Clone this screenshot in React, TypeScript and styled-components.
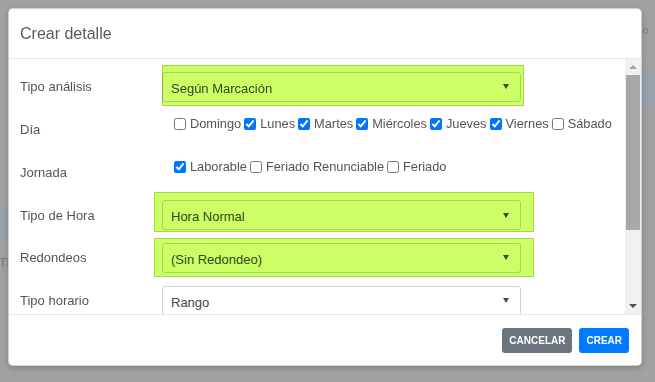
import React from 'react'
import styled, { createGlobalStyle } from 'styled-components'

const GlobalStyle = createGlobalStyle`
  html, body {
    margin: 0;
    padding: 0;
  }
  body {
    font-family: 'Liberation Sans', Arial, sans-serif;
    background: #a1a1a1;
  }
`

const Screen = styled.div`
  position: relative;
  width: 655px;
  height: 382px;
  overflow: hidden;
  background: #a1a1a1;
`

// page behind the backdrop, only its edges peek out
const Underlay = styled.div`
  display: flex;
  justify-content: space-between;
  height: 100%;
`

const Edge = styled.div<{ $width: number; $top: number; $end?: boolean }>`
  width: ${(p) => p.$width}px;
  padding-top: ${(p) => p.$top}px;
  overflow: hidden;
  display: flex;
  flex-direction: column;
  align-items: ${(p) => (p.$end ? 'flex-end' : 'flex-start')};
`

const FaintText = styled.span<{ $shift: number; $size: number; $gap?: number }>`
  font-size: ${(p) => p.$size}px;
  color: #7c7c7c;
  white-space: nowrap;
  margin-top: ${(p) => p.$gap || 0}px;
  margin-left: ${(p) => p.$shift}px;
  margin-right: ${(p) => -p.$shift}px;
  line-height: 16px;
`

const Band = styled.div<{ $height: number; $gap: number }>`
  width: 100%;
  height: ${(p) => p.$height}px;
  margin-top: ${(p) => p.$gap}px;
  background: #99a1ab;
  flex-shrink: 0;
`

const Modal = styled.div`
  position: absolute;
  top: 8px;
  left: 8px;
  width: 634px;
  height: 358px;
  box-sizing: border-box;
  background: #fff;
  border: 1px solid rgba(0, 0, 0, 0.18);
  border-radius: 5px;
  box-shadow: 0 2px 6px rgba(0, 0, 0, 0.2);
  display: flex;
  flex-direction: column;
  overflow: hidden;
`

const Header = styled.div`
  height: 49px;
  flex-shrink: 0;
  display: flex;
  align-items: center;
  padding-left: 11px;
  border-bottom: 1px solid #e6e9ec;
`

const Title = styled.h5`
  margin: 0;
  font-size: 16px;
  font-weight: 400;
  color: #5a5a5a;
`

const Body = styled.div`
  flex: 1;
  display: flex;
  min-height: 0;
`

const Content = styled.div`
  flex: 1;
  overflow: hidden;
  padding: 6px 0 0 11px;
`

const Row = styled.div<{ $height: number }>`
  display: grid;
  grid-template-columns: 142px 1fr;
  height: ${(p) => p.$height}px;
  align-items: center;
`

const Label = styled.label`
  font-size: 13px;
  color: #555;
  line-height: 1;
`

const SelectWrap = styled.div`
  position: relative;
  width: 359px;
  height: 30px;
`

const Select = styled.div`
  box-sizing: border-box;
  width: 100%;
  height: 100%;
  border: 1px solid #ced4da;
  border-radius: 3px;
  background: #fff;
  display: flex;
  align-items: center;
  justify-content: space-between;
  padding: 3px 11px 0 8px;
  font-size: 13px;
  color: #40464c;
`

const Caret = styled.span`
  width: 0;
  height: 0;
  margin-top: -3px;
  border-left: 3.5px solid transparent;
  border-right: 3.5px solid transparent;
  border-top: 5px solid #4a4a4a;
`

const Highlight = styled.div<{ $t: number; $l: number; $r: number; $b: number }>`
  position: absolute;
  top: ${(p) => p.$t}px;
  left: ${(p) => p.$l}px;
  right: ${(p) => p.$r}px;
  bottom: ${(p) => p.$b}px;
  background: #ccff66;
  border: 1px solid #a6d842;
  mix-blend-mode: multiply;
  pointer-events: none;
`

const Checks = styled.div`
  align-self: start;
  padding-top: 6px;
  margin-left: 9px;
  display: flex;
  flex-wrap: wrap;
  font-size: 12.8px;
  line-height: 20px;
  color: #555;
`

const Check = styled.label`
  display: inline-flex;
  align-items: center;
  white-space: nowrap;

  input {
    width: 12px;
    height: 12px;
    margin: 0 4px 0 3px;
  }
`

const Scrollbar = styled.div`
  width: 16px;
  flex-shrink: 0;
  background: #f1f1f1;
  display: flex;
  flex-direction: column;
`

const ArrowBox = styled.div`
  height: 16px;
  display: flex;
  align-items: center;
  justify-content: center;
  flex-shrink: 0;
`

const Arrow = styled.span<{ $up?: boolean }>`
  width: 0;
  height: 0;
  border-left: 4px solid transparent;
  border-right: 4px solid transparent;
  ${(p) =>
    p.$up
      ? 'border-bottom: 4px solid #a3a3a3;'
      : 'border-top: 4px solid #505050;'}
`

const Thumb = styled.div`
  height: 155px;
  margin: 0 1px;
  background: #a8a8a8;
`

const Track = styled.div`
  flex: 1;
`

const Footer = styled.div`
  height: 50px;
  flex-shrink: 0;
  border-top: 1px solid #e6e9ec;
  display: flex;
  justify-content: flex-end;
  align-items: center;
  gap: 7px;
  padding-right: 12px;
`

const Button = styled.button<{ $variant: 'secondary' | 'primary' }>`
  height: 25px;
  padding: 0 7px;
  border: none;
  border-radius: 3px;
  font-family: 'Liberation Sans', Arial, sans-serif;
  font-size: 10px;
  font-weight: 700;
  color: #fff;
  background: ${(p) => (p.$variant === 'primary' ? '#007bff' : '#6c757d')};
`

const dias = [
  { name: 'Domingo', checked: false },
  { name: 'Lunes', checked: true },
  { name: 'Martes', checked: true },
  { name: 'Miércoles', checked: true },
  { name: 'Jueves', checked: true },
  { name: 'Viernes', checked: true },
  { name: 'Sábado', checked: false },
]

const jornadas = [
  { name: 'Laborable', checked: true },
  { name: 'Feriado Renunciable', checked: false },
  { name: 'Feriado', checked: false },
]

type Mark = { t: number; l: number; r: number; b: number }

const SelectField: React.FC<{ value: string; mark?: Mark }> = ({ value, mark }) => (
  <SelectWrap>
    <Select>
      <span>{value}</span>
      <Caret />
    </Select>
    {mark && <Highlight $t={mark.t} $l={mark.l} $r={mark.r} $b={mark.b} />}
  </SelectWrap>
)

const CheckGroup: React.FC<{ items: { name: string; checked: boolean }[] }> = ({ items }) => (
  <Checks>
    {items.map((item) => (
      <Check key={item.name}>
        <input type="checkbox" defaultChecked={item.checked} />
        {item.name}
      </Check>
    ))}
  </Checks>
)

export default function App() {
  return (
    <Screen>
      <GlobalStyle />
      <Underlay>
        <Edge $width={8} $top={212}>
          <Band $height={31} $gap={0} />
          <FaintText $shift={-1} $size={13} $gap={12}>
            Ti
          </FaintText>
        </Edge>
        <Edge $width={13} $top={22} $end>
          <FaintText $shift={-6} $size={11}>
            Horario
          </FaintText>
          <Band $height={33} $gap={37} />
        </Edge>
      </Underlay>

      <Modal>
        <Header>
          <Title>Crear detalle</Title>
        </Header>
        <Body>
          <Content>
            <Row $height={43}>
              <Label>Tipo análisis</Label>
              <SelectField value="Según Marcación" mark={{ t: -7, l: 0, r: -3, b: -4 }} />
            </Row>
            <Row $height={43}>
              <Label>Día</Label>
              <CheckGroup items={dias} />
            </Row>
            <Row $height={43}>
              <Label>Jornada</Label>
              <CheckGroup items={jornadas} />
            </Row>
            <Row $height={42}>
              <Label>Tipo de Hora</Label>
              <SelectField value="Hora Normal" mark={{ t: -8, l: -8, r: -13, b: -2 }} />
            </Row>
            <Row $height={43}>
              <Label>Redondeos</Label>
              <SelectField value="(Sin Redondeo)" mark={{ t: -5, l: -8, r: -13, b: -4 }} />
            </Row>
            <Row $height={43}>
              <Label>Tipo horario</Label>
              <SelectField value="Rango" />
            </Row>
          </Content>
          <Scrollbar>
            <ArrowBox>
              <Arrow $up />
            </ArrowBox>
            <Thumb />
            <Track />
            <ArrowBox>
              <Arrow />
            </ArrowBox>
          </Scrollbar>
        </Body>
        <Footer>
          <Button $variant="secondary">CANCELAR</Button>
          <Button $variant="primary">CREAR</Button>
        </Footer>
      </Modal>
    </Screen>
  )
}
